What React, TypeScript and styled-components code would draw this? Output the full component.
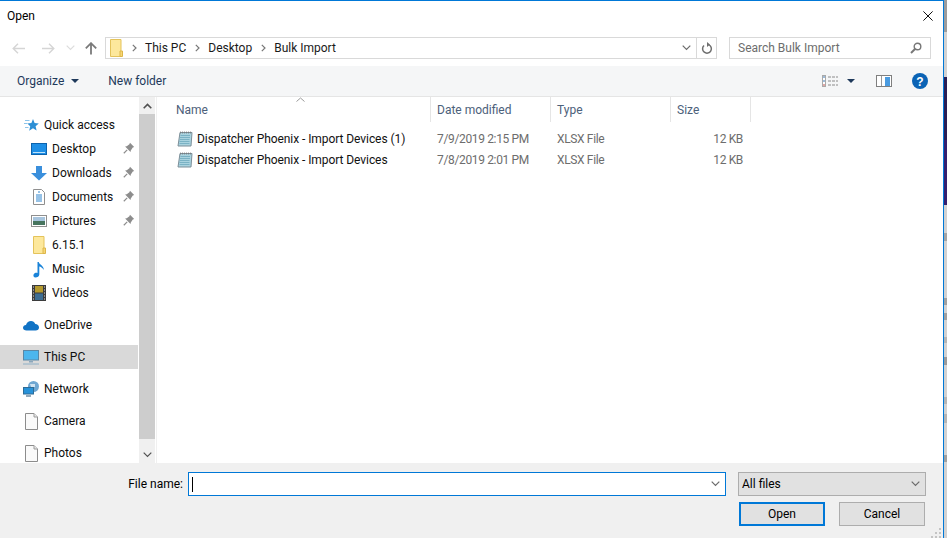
import React from "react";
import styled, { createGlobalStyle } from "styled-components";

const Global = createGlobalStyle`
  html, body { margin: 0; padding: 0; width: 947px; height: 538px; overflow: hidden; background: #d2d2d2; }
  #root { width: 947px; height: 538px; }
  * { box-sizing: border-box; }
`;

const Page = styled.div`
  display: flex; width: 947px; height: 538px;
  font-family: Roboto, "Noto Sans", "Liberation Sans", sans-serif;
  font-size: 12px; color: #000;
`;
const Dialog = styled.div`
  width: 944px; height: 538px; display: flex; flex-direction: column;
  background: #fff; border-top: 1px solid #0078d7; border-right: 1px solid #0078d7;
`;
const Backdrop = styled.div`
  width: 3px; display: flex; flex-direction: column;
`;
const BackdropBand = styled.div<{ $h: number; $c: string }>`
  height: ${p => p.$h}px; background: ${p => p.$c}; flex: none;
`;

const TitleBar = styled.div`
  height: 29px; display: flex; align-items: center; justify-content: space-between;
  padding: 0 10px 0 7px; font-size: 12px;
`;
const CloseBtn = styled.div`width: 10px; height: 10px; display: flex;`;

const NavBar = styled.div`
  height: 36px; display: flex; align-items: flex-start; padding: 7px 0 0 11px;
`;
const NavButtons = styled.div`
  width: 94px; height: 22px; display: flex; align-items: center; flex: none;
`;
const NavSlot = styled.div<{ $w: number; $ml?: number }>`
  width: ${p => p.$w}px; margin-left: ${p => p.$ml ?? 0}px; display: flex; justify-content: center; align-items: center; flex: none;
`;
const AddressBox = styled.div`
  width: 612px; height: 22px; border: 1px solid #d9d9d9; display: flex; align-items: center; flex: none;
`;
const Crumbs = styled.div`
  flex: 1; display: flex; align-items: center; padding-left: 4px; color: #1a1a1a; min-width: 0;
`;
const CrumbSep = styled.span`width: 22px; display: flex; justify-content: center; flex: none;`;
const Crumb = styled.span`white-space: nowrap;`;
const AddressEnd = styled.div`width: 20px; height: 20px; display: flex; align-items: center; justify-content: center; flex: none;`;
const RefreshBox = styled(AddressEnd)`border-left: 1px solid #d9d9d9;`;
const SearchBox = styled.div`
  width: 202px; height: 22px; margin-left: 12px; border: 1px solid #d9d9d9; display: flex;
  align-items: center; justify-content: space-between; padding: 0 8px; color: #6d6d6d; flex: none;
`;

const ToolBar = styled.div`
  height: 31px; background: #f5f6f7; border-bottom: 1px solid #e5e5e5; display: flex; align-items: center;
  padding: 0 15px 0 17px; color: #1e395b; flex: none;
`;
const ToolLabel = styled.span`display: inline-flex; align-items: center; gap: 7px;`;
const NewFolder = styled.span`margin-left: 29px;`;
const ToolSpacer = styled.div`flex: 1;`;
const ToolIcons = styled.div`display: flex; align-items: center;`;
const ViewIcon = styled.svg`display: block;`;
const Caret = styled.svg`display: block; margin-left: 9px;`;
const PaneIcon = styled.svg`display: block; margin-left: 21px;`;
const HelpIcon = styled.svg`display: block; margin-left: 20px;`;

const Main = styled.div`flex: 1; display: flex; min-height: 0;`;
const Tree = styled.div`width: 139px; flex: none; padding-top: 16px; overflow: hidden;`;
const TreeRow = styled.div<{ $child?: boolean; $sel?: boolean; $gap?: number }>`
  height: 24px; display: flex; align-items: center; position: relative;
  padding-left: ${p => (p.$child ? 52 : 44)}px; margin-top: ${p => p.$gap ?? 0}px;
  margin-right: 1px;
  background: ${p => (p.$sel ? "#d9d9d9" : "transparent")}; color: #0f0f0f; white-space: nowrap;
`;
const TreeIcon = styled.span<{ $child?: boolean }>`
  position: absolute; left: ${p => (p.$child ? 30 : 22)}px; top: 3px; width: 18px; height: 18px; display: flex;
  align-items: center; justify-content: center;
`;
const Pin = styled.span`position: absolute; left: 123px; top: 5px; display: flex;`;

const Scrollbar = styled.div`
  width: 16px; flex: none; background: #f0f0f0; display: flex; flex-direction: column;
`;
const ScrollBtn = styled.div`height: 17px; display: flex; align-items: center; justify-content: center; flex: none;`;
const Thumb = styled.div`flex: 1; background: #cdcdcd; margin-bottom: 7px;`;
const Sash = styled.div`width: 2px; flex: none; border-right: 1px solid #f0f0f0;`;

const FileArea = styled.div`flex: 1; position: relative; padding-left: 13px; min-width: 0;`;
const SortArrow = styled.svg`position: absolute; left: 139px; top: 0; display: block;`;
const HeaderRow = styled.div`display: flex; height: 25px;`;
const HeaderCell = styled.div<{ $w: number }>`
  width: ${p => p.$w}px; flex: none; border-right: 1px solid #e5e5e5; color: #4c607a;
  padding: 6px 0 0 6px;
`;
const FileList = styled.div`padding-top: 6px;`;
const FileRow = styled.div`display: flex; height: 21px; align-items: center; color: #6d6d6d;`;
const NameCell = styled.div`
  width: 261px; flex: none; display: flex; align-items: center; gap: 4px; padding-left: 7px; color: #111;
  white-space: nowrap; letter-spacing: -0.07px;
`;
const Cell = styled.div<{ $w: number; $right?: boolean }>`
  width: ${p => p.$w}px; flex: none; padding-left: ${p => (p.$right ? 0 : 6)}px;
  text-align: ${p => (p.$right ? "right" : "left")}; white-space: nowrap; letter-spacing: -0.35px;
`;

const Footer = styled.div`
  height: 75px; background: #f0f0f0; flex: none; position: relative; display: flex; flex-direction: column;
  padding-top: 9px;
`;
const FooterRow = styled.div`display: flex; align-items: center;`;
const FileLabel = styled.span`width: 183px; text-align: right; white-space: nowrap;`;
const NameBox = styled.div`
  width: 538px; height: 24px; margin-left: 5px; background: #fff; border: 1px solid #0078d7;
  display: flex; align-items: center; justify-content: space-between; padding: 0 5px 0 3px; flex: none;
`;
const Cursor = styled.span`display: block; width: 1px; height: 15px; background: #000;`;
const TypeBox = styled.div`
  width: 188px; height: 24px; margin-left: 12px; background: #e1e1e1; border: 1px solid #adadad;
  display: flex; align-items: center; justify-content: space-between; padding: 0 5px 0 3px; flex: none;
`;
const ButtonRow = styled.div`display: flex; padding-left: 739px; margin-top: 6px;`;
const DlgButton = styled.button<{ $primary?: boolean }>`
  width: 86px; height: 24px; background: #e1e1e1; font: inherit; color: #000; padding: 0; flex: none;
  border: ${p => (p.$primary ? "2px solid #0078d7" : "1px solid #adadad")};
  margin-right: ${p => (p.$primary ? 14 : 0)}px;
`;
const Grip = styled.svg`position: absolute; right: 1px; bottom: 0; display: block;`;

const Chev = ({ c = "#6b6b6b" }: { c?: string }) => (
  <svg width="9" height="6" viewBox="0 0 9 6"><path d="M.7.7 4.500 4.500 8.300.7" fill="none" stroke={c} strokeWidth="1.200" /></svg>
);
const Sep = () => (
  <CrumbSep><svg width="5" height="8" viewBox="0 0 5 8"><path d="M.8.8 4 4 .8 7.200" fill="none" stroke="#777" strokeWidth="1.200" /></svg></CrumbSep>
);
const FolderIcon = ({ w = 13, h = 18 }: { w?: number; h?: number }) => (
  <svg width={w} height={h} viewBox="0 0 13 18">
    <path d="M.5.5h10.500v17H.5z" fill="#fde89c" stroke="#e4c35b" />
    <path d="M10 12h2.500v5.500H10z" fill="#f8d775" stroke="#dcb64a" />
  </svg>
);
const PinIcon = () => (
  <svg width="12" height="12" viewBox="0 0 12 12">
    <path d="M7 .8 11.200 5 9.800 5.600 7.800 8.400 7.500 10 2.100 4.600 3.700 4.200 6.400 2.200Z" fill="#8d8d8d" />
    <path d="M4.200 7.900.8 11.200" stroke="#8d8d8d" strokeWidth="1.200" />
  </svg>
);
const PageIcon = () => (
  <svg width="13" height="17" viewBox="0 0 13 17">
    <path d="M.5.5h8.500l3.500 3.500v12.500H.5z" fill="#fafafa" stroke="#8c8c8c" />
    <path d="M9 .5V4h3.500" fill="#e8e8e8" stroke="#9c9c9c" />
  </svg>
);
const XlsIcon = () => (
  <svg width="16" height="16" viewBox="0 0 16 16">
    <path d="M3 1.500h12L14 15H1z" fill="#a9d3df" stroke="#7c8f99" />
    <path d="M3.500.5v2M5.500.5v2M7.500.5v2M9.500.5v2M11.500.5v2M13.500.5v2" stroke="#777" strokeWidth=".7" />
    <path d="M3.500 4.500h9.500M3 6.500h10M3 8.500h9.500M2.500 10.500h10M2.500 12.500h10" stroke="#6fa9bd" strokeWidth=".8" />
  </svg>
);

type Item = { label: string; icon: React.ReactNode; child?: boolean; pin?: boolean; sel?: boolean; gap?: number };
const tree: Item[] = [
  { label: "Quick access", icon: (
    <svg width="15" height="15" viewBox="0 0 15 15">
      <path d="M9 1 10.600 5 14.800 5.400 11.600 8.200 12.600 12.600 9 10.300 5.200 12.800 6.200 8.200 3.400 5.400 7.400 5Z" fill="#2d8fd5" />
      <path d="M1 2.500h4.500M0 5.500h3.500M1 9.500h3.500" stroke="#8cc4ea" />
    </svg>) },
  { label: "Desktop", child: true, pin: true, icon: (
    <svg width="16" height="12" viewBox="0 0 16 12"><rect x=".5" y=".5" width="15" height="11" fill="#1e8fe6" stroke="#0d63ad" /><rect x="2" y="9" width="12" height="1" fill="#bfe3fb" /></svg>) },
  { label: "Downloads", child: true, pin: true, icon: (
    <svg width="16" height="16" viewBox="0 0 16 16"><path d="M5 1h6v7h5l-8 7.500L0 8h5z" fill="#3a8fdc" /></svg>) },
  { label: "Documents", child: true, pin: true, icon: (
    <svg width="12" height="16" viewBox="0 0 12 16"><path d="M.5.5h8l3 3v12H.5z" fill="#fff" stroke="#8f8f8f" /><path d="M5 3h2M3 6h6M3 8h6M3 10h6M3 12h6" stroke="#2f86cf" /></svg>) },
  { label: "Pictures", child: true, pin: true, icon: (
    <svg width="16" height="12" viewBox="0 0 16 12"><rect x=".5" y=".5" width="15" height="11" fill="#fff" stroke="#8f8f8f" /><rect x="2" y="2" width="12" height="4" fill="#a8c5de" /><rect x="2" y="6" width="12" height="4" fill="#47755f" /></svg>) },
  { label: "6.15.1", child: true, icon: <FolderIcon /> },
  { label: "Music", child: true, icon: (
    <svg width="12" height="17" viewBox="0 0 12 17"><path d="M4.500 1h1.300c.3 2.500 5.200 3.500 5 8-.8-2-3-3.400-4.500-3.600V13.500c0 2-2 3-3.800 3S0 15 .6 13.500C1.200 12 3 11.500 4.500 12Z" fill="#1a83d8" /></svg>) },
  { label: "Videos", child: true, icon: (
    <svg width="14" height="16" viewBox="0 0 14 16"><rect width="14" height="16" fill="#3c3c3c" /><rect x="3" y="1" width="8" height="6.500" fill="#b59a2e" /><rect x="3" y="8.500" width="8" height="6.500" fill="#3d6d93" /><path d="M1 2h1M1 5h1M1 8h1M1 11h1M1 14h1M12 2h1M12 5h1M12 8h1M12 11h1M12 14h1" stroke="#ddd" /></svg>) },
  { label: "OneDrive", gap: 8, icon: (
    <svg width="16" height="11" viewBox="0 0 16 11"><path d="M3.500 10.500C1.500 10.500 0 9.400 0 7.700 0 6.200 1.300 5 3 5 3.800 2.500 5.700 1 8 1c2 0 3.500 1 4.300 3 2 0 3.700 1.500 3.700 3.400 0 1.800-1.400 3.100-3.300 3.100Z" fill="#1173c5" /></svg>) },
  { label: "This PC", sel: true, gap: 8, icon: (
    <svg width="16" height="15" viewBox="0 0 16 15"><rect x=".5" y=".5" width="15" height="9.500" fill="#4cb6ee" stroke="#5a87a6" /><path d="M6 11h4v1.500H6z" fill="#8ba7bc" /><path d="M0 14h16" stroke="#8fb0c6" /></svg>) },
  { label: "Network", gap: 8, icon: (
    <svg width="16" height="16" viewBox="0 0 16 16"><circle cx="10.500" cy="5.500" r="5.500" fill="#6fa7d2" /><path d="M7 3h5v3H8z" fill="#cfe3f2" /><rect x=".5" y="6.500" width="10" height="6.500" fill="#2792d9" stroke="#2e6b96" /><path d="M3 15h5" stroke="#6f8da3" strokeWidth="1.500" /></svg>) },
  { label: "Camera", gap: 8, icon: <PageIcon /> },
  { label: "Photos", gap: 8, icon: <PageIcon /> },
];

const files = [
  { name: "Dispatcher Phoenix - Import Devices (1)", date: "7/9/2019 2:15 PM" },
  { name: "Dispatcher Phoenix - Import Devices", date: "7/8/2019 2:01 PM" },
];

const bands: [number, string][] = [
  [32, "#9c9c9c"], [45, "#d2d2d2"], [63, "#2a1f55"], [65, "#35206f"], [28, "#d2d2d2"],
  [8, "#a5a5a5"], [57, "#d2d2d2"], [7, "#a0a0a0"], [8, "#d2d2d2"], [7, "#a0a0a0"], [17, "#d2d2d2"],
  [6, "#b5b5b5"], [14, "#d2d2d2"], [8, "#9a9a9a"], [32, "#d2d2d2"], [7, "#b5b5b5"], [10, "#d2d2d2"],
  [9, "#b5b5b5"], [32, "#d2d2d2"], [7, "#a0a0a0"], [58, "#d2d2d2"],
];

export default function App() {
  return (
    <Page>
      <Global />
      <Dialog>
        <TitleBar>
          <span>Open</span>
          <CloseBtn>
            <svg width="10" height="10" viewBox="0 0 10 10"><path d="M.4.4l9.200 9.200M9.600.4.4 9.600" stroke="#111" strokeWidth="1" /></svg>
          </CloseBtn>
        </TitleBar>
        <NavBar>
          <NavButtons>
            <NavSlot $w={13} $ml={1}>
              <svg width="13" height="11" viewBox="0 0 13 11"><path d="M6 .7 1.200 5.500 6 10.300M1.200 5.500H13" fill="none" stroke="#d5d5d5" strokeWidth="1.400" /></svg>
            </NavSlot>
            <NavSlot $w={13} $ml={17}>
              <svg width="13" height="11" viewBox="0 0 13 11"><path d="M7 .7l4.800 4.800L7 10.300M11.800 5.500H0" fill="none" stroke="#d5d5d5" strokeWidth="1.400" /></svg>
            </NavSlot>
            <NavSlot $w={9} $ml={11}><Chev c="#dcdcdc" /></NavSlot>
            <NavSlot $w={12} $ml={10}>
              <svg width="12" height="13" viewBox="0 0 12 13"><path d="M6 12.500V1.200M.8 6.400 6 1.200l5.200 5.200" fill="none" stroke="#7a7a7a" strokeWidth="1.800" /></svg>
            </NavSlot>
          </NavButtons>
          <AddressBox>
            <Crumbs>
              <FolderIcon />
              <Sep />
              <Crumb>This PC</Crumb>
              <Sep />
              <Crumb>Desktop</Crumb>
              <Sep />
              <Crumb>Bulk Import</Crumb>
            </Crumbs>
            <AddressEnd><Chev /></AddressEnd>
            <RefreshBox>
              <svg width="12" height="13" viewBox="0 0 12 13"><path d="M7.500 2.600A4.400 4.400 0 1 1 3 3.500" fill="none" stroke="#6f6f6f" strokeWidth="1.500" /><path d="M6 0v5l3-2.500Z" fill="#6f6f6f" /></svg>
            </RefreshBox>
          </AddressBox>
          <SearchBox>
            <span>Search Bulk Import</span>
            <svg width="12" height="12" viewBox="0 0 12 12"><circle cx="7.500" cy="4.500" r="3.300" fill="none" stroke="#777" strokeWidth="1.400" /><path d="M5 7 1 11" stroke="#777" strokeWidth="2" /></svg>
          </SearchBox>
        </NavBar>
        <ToolBar>
          <ToolLabel>
            Organize
            <svg width="8" height="4" viewBox="0 0 8 4"><path d="M0 0h8L4 4Z" fill="#1e395b" /></svg>
          </ToolLabel>
          <NewFolder>New folder</NewFolder>
          <ToolSpacer />
          <ToolIcons>
            <ViewIcon width="16" height="12" viewBox="0 0 16 12">
              <rect x=".5" y=".5" width="3" height="11" fill="#fff" stroke="#a9a9a9" />
              <path d="M6 2h10M6 6h10M6 10h10" stroke="#8a8a8a" strokeDasharray="3 1" />
              <path d="M1 2h2M1 6h2" stroke="#3d78b5" /><path d="M1 10h2" stroke="#c0504d" />
            </ViewIcon>
            <Caret width="8" height="4" viewBox="0 0 8 4"><path d="M0 0h8L4 4Z" fill="#1e395b" /></Caret>
            <PaneIcon width="16" height="12" viewBox="0 0 16 12">
              <rect x=".5" y=".5" width="15" height="11" fill="#fff" stroke="#7f7f7f" />
              <rect x="9" y="2" width="5" height="9" fill="#4a9be0" />
              <rect x="5" y="1" width="1" height="10" fill="#999" />
            </PaneIcon>
            <HelpIcon width="16" height="16" viewBox="0 0 16 16">
              <circle cx="8" cy="8" r="8" fill="#0b63b5" />
              <text x="8" y="12.500" textAnchor="middle" fontSize="12" fontWeight="700" fill="#fff" fontFamily="Liberation Sans">?</text>
            </HelpIcon>
          </ToolIcons>
        </ToolBar>
        <Main>
          <Tree>
            {tree.map(t => (
              <TreeRow key={t.label} $child={t.child} $sel={t.sel} $gap={t.gap}>
                <TreeIcon $child={t.child}>{t.icon}</TreeIcon>
                {t.label}
                {t.pin && <Pin><PinIcon /></Pin>}
              </TreeRow>
            ))}
          </Tree>
          <Scrollbar>
            <ScrollBtn><svg width="9" height="6" viewBox="0 0 9 6"><path d="M.7 5.300 4.500 1.500l3.800 3.800" fill="none" stroke="#505050" strokeWidth="1.600" /></svg></ScrollBtn>
            <Thumb />
            <ScrollBtn><Chev c="#505050" /></ScrollBtn>
          </Scrollbar>
          <Sash />
          <FileArea>
            <SortArrow width="9" height="5" viewBox="0 0 9 5"><path d="M.5 4.500l4-3.500 4 3.500" fill="none" stroke="#9a9a9a" /></SortArrow>
            <HeaderRow>
              <HeaderCell $w={261}>Name</HeaderCell>
              <HeaderCell $w={120}>Date modified</HeaderCell>
              <HeaderCell $w={120}>Type</HeaderCell>
              <HeaderCell $w={80}>Size</HeaderCell>
            </HeaderRow>
            <FileList>
              {files.map(f => (
                <FileRow key={f.name}>
                  <NameCell><XlsIcon />{f.name}</NameCell>
                  <Cell $w={120}>{f.date}</Cell>
                  <Cell $w={120}>XLSX File</Cell>
                  <Cell $w={72} $right>12 KB</Cell>
                </FileRow>
              ))}
            </FileList>
          </FileArea>
        </Main>
        <Footer>
          <FooterRow>
            <FileLabel>File name:</FileLabel>
            <NameBox><Cursor /><Chev /></NameBox>
            <TypeBox><span>All files</span><Chev /></TypeBox>
          </FooterRow>
          <ButtonRow>
            <DlgButton $primary>Open</DlgButton>
            <DlgButton>Cancel</DlgButton>
          </ButtonRow>
          <Grip width="11" height="10" viewBox="0 0 11 10">
            <path d="M8 0h2v2H8zM4 4h2v2H4zM8 4h2v2H8zM0 8h2v2H0zM4 8h2v2H4zM8 8h2v2H8z" fill="#c4c4c4" />
          </Grip>
        </Footer>
      </Dialog>
      <Backdrop>
        {bands.map(([h, c], i) => <BackdropBand key={i} $h={h} $c={c} />)}
      </Backdrop>
    </Page>
  );
}
